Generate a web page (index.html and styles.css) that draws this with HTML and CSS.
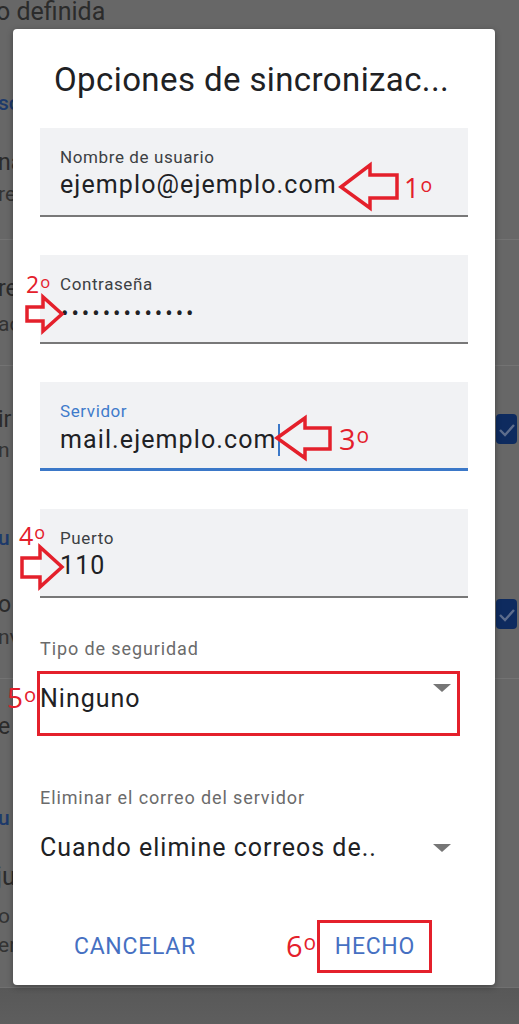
FILE: index.html
```html
<!DOCTYPE html>
<html lang="es">
<head>
<meta charset="utf-8">
<title>Opciones de sincronización</title>
<link rel="stylesheet" href="styles.css">
</head>
<body>
<div class="screen">
  <div class="bg">
    <div class="bg-big mt-n2">o definida</div>
    <div class="bg-head mt-65">sco</div>
    <div class="bg-title mt-35">na</div>
    <div class="bg-sub mt-6">re</div>
    <div class="bg-sep mt-33"></div>
    <div class="bg-title mt-36">re</div>
    <div class="bg-sub mt-10">ac</div>
    <div class="bg-sep mt-29"></div>
    <div class="bg-item mt-41">
      <div class="bg-text">
        <div class="bg-title">ir</div>
        <div class="bg-sub mt-5">n</div>
      </div>
      <div class="bg-check"><svg viewBox="0 0 21 30" width="21" height="30"><path d="M4 16 L9 21 L18 11" fill="none" stroke="#5d6d8c" stroke-width="2.4"/></svg></div>
    </div>
    <div class="bg-head mt-64">u</div>
    <div class="bg-item mt-42">
      <div class="bg-text">
        <div class="bg-title">o</div>
        <div class="bg-sub mt-7">nv</div>
      </div>
      <div class="bg-check"><svg viewBox="0 0 21 30" width="21" height="30"><path d="M4 16 L9 21 L18 11" fill="none" stroke="#5d6d8c" stroke-width="2.4"/></svg></div>
    </div>
    <div class="bg-sep mt-29"></div>
    <div class="bg-title mt-35">e</div>
    <div class="bg-head mt-66">u</div>
    <div class="bg-big mt-33">ju</div>
    <div class="bg-sub mt-13">o</div>
    <div class="bg-sub mt-5">er</div>
  </div>
  <div class="bg-nav"></div>

  <div class="dialog">
    <h1 class="dlg-title">Opciones de sincronizac...</h1>
    <div class="field">
      <div class="field-label">Nombre de usuario</div>
      <div class="field-value">ejemplo@ejemplo.com</div>
    </div>
    <div class="field">
      <div class="field-label">Contraseña</div>
      <div class="field-value dots">•••••••••••••</div>
    </div>
    <div class="field focused">
      <div class="field-label">Servidor</div>
      <div class="field-value">mail.ejemplo.com<span class="caret"></span></div>
    </div>
    <div class="field">
      <div class="field-label">Puerto</div>
      <div class="field-value">110</div>
    </div>
    <div class="sel-label">Tipo de seguridad</div>
    <div class="select first"><span class="sel-value">Ninguno</span><span class="tri"></span></div>
    <div class="sel-label second">Eliminar el correo del servidor</div>
    <div class="select"><span class="sel-value">Cuando elimine correos de..</span><span class="tri"></span></div>
    <div class="actions">
      <button class="btn">CANCELAR</button>
      <button class="btn">HECHO</button>
    </div>
  </div>

  <div class="notes">
    <svg class="arrow a1" viewBox="0 0 60 47" width="60" height="47"><polygon points="2,24 31,2 31,12 58,12 58,35 31,35 31,45"/></svg>
    <span class="num n1">1<span class="ord">o</span></span>
    <span class="num n2">2<span class="ord">o</span></span>
    <svg class="arrow a2" viewBox="0 0 40 39" width="40" height="39"><polygon points="2,12 18,12 18,2 37,19 18,36 18,26 2,26"/></svg>
    <svg class="arrow a3" viewBox="0 0 57 44" width="57" height="44"><polygon points="2,22 30,2 30,12 55,12 55,33 30,33 30,42"/></svg>
    <span class="num n3">3<span class="ord">o</span></span>
    <span class="num n4">4<span class="ord">o</span></span>
    <svg class="arrow a4" viewBox="0 0 45 45" width="45" height="45"><polygon points="2,13 20,13 20,2 42,22 20,42 20,32 2,32"/></svg>
    <div class="box b1"></div>
    <span class="num n5">5<span class="ord">o</span></span>
    <div class="box b2"></div>
    <span class="num n6">6<span class="ord">o</span></span>
  </div>
</div>
</body>
</html>
```

FILE: styles.css
```css
* { box-sizing: border-box; }
html, body { margin: 0; padding: 0; }
body {
  width: 519px;
  height: 1024px;
  overflow: hidden;
  background: #666666;
  font-family: Roboto, "Noto Sans", Arial, sans-serif;
}
.screen {
  position: relative;
  width: 519px;
  height: 1024px;
  display: flex;
  flex-direction: column;
  background: #676767;
  overflow: hidden;
}
.bg {
  flex: 1;
  overflow: hidden;
  display: flex;
  flex-direction: column;
  color: #2b2b2b;
  white-space: nowrap;
}
.bg-nav {
  height: 37px;
  background: linear-gradient(#585858, #5e5e5e);
  border-top: 1px solid #707070;
}
.bg-big { font-size: 25px; line-height: 28px; margin-left: -4px; }
.bg-head { font-size: 21px; line-height: 24px; color: #1d3a6b; font-weight: 500; margin-left: -2px; }
.bg-title { font-size: 23px; line-height: 26px; margin-left: -2px; }
.bg-sub { font-size: 21px; line-height: 24px; margin-left: -2px; color: #333; }
.bg-sep { height: 1px; background: #737373; }
.bg-item { display: flex; justify-content: space-between; align-items: flex-start; }
.bg-check {
  width: 21px;
  height: 30px;
  margin-top: 7px;
  margin-right: 2px;
  background: #0e2b5f;
  border-radius: 4px;
}
.bg-check svg { display: block; }
.mt-n2 { margin-top: -2px; }
.mt-5 { margin-top: 5px; }
.mt-6 { margin-top: 6px; }
.mt-7 { margin-top: 7px; }
.mt-10 { margin-top: 10px; }
.mt-13 { margin-top: 13px; }
.mt-29 { margin-top: 29px; }
.mt-33 { margin-top: 33px; }
.mt-35 { margin-top: 35px; }
.mt-36 { margin-top: 36px; }
.mt-41 { margin-top: 41px; }
.mt-42 { margin-top: 42px; }
.mt-64 { margin-top: 64px; }
.mt-65 { margin-top: 65px; }
.mt-66 { margin-top: 66px; }

.dialog {
  position: absolute;
  left: 13px;
  top: 29px;
  width: 482px;
  height: 956px;
  background: #ffffff;
  border-radius: 4px;
  box-shadow: 0 2px 6px rgba(0,0,0,0.35);
  padding: 31px 27px 0 27px;
  display: flex;
  flex-direction: column;
}
.dlg-title {
  margin: 0 0 0 14px;
  font-size: 33px;
  line-height: 40px;
  font-weight: 400;
  letter-spacing: 0.4px;
  color: #202124;
  white-space: nowrap;
}
.field {
  margin-top: 28px;
  height: 89px;
  background: #f1f2f4;
  border-bottom: 2px solid #787878;
  padding: 19px 20px 0 20px;
}
.field + .field { margin-top: 38px; }
.field.focused { border-bottom: 3px solid #3b78c8; }
.field-label {
  font-size: 17px;
  line-height: 20px;
  letter-spacing: 0.6px;
  color: #3c4043;
}
.focused .field-label { color: #3f7bcb; }
.field-value {
  margin-top: 3px;
  font-size: 25px;
  line-height: 30px;
  letter-spacing: 1.1px;
  color: #202124;
  white-space: nowrap;
  display: flex;
  align-items: center;
}
.field-value.dots {
  font-size: 22px;
  letter-spacing: 3px;
  margin-left: 1px;
  padding-top: 2px;
}
.caret {
  display: inline-block;
  width: 2px;
  height: 32px;
  background: #3b78c8;
  margin-left: 1px;
}
.sel-label {
  margin-top: 41px;
  font-size: 18px;
  line-height: 20px;
  letter-spacing: 0.9px;
  color: #6b6b6b;
}
.sel-label.second { margin-top: 74px; }
.select {
  margin-top: 25px;
  height: 30px;
  display: flex;
  align-items: center;
  justify-content: space-between;
  padding-right: 17px;
}
.sel-value {
  font-size: 25px;
  line-height: 30px;
  letter-spacing: 1px;
  color: #202124;
}
.tri {
  width: 0;
  height: 0;
  border-left: 9px solid transparent;
  border-right: 9px solid transparent;
  border-top: 8px solid #767676;
}
.select.first .tri { margin-top: -22px; }
.actions {
  margin-top: 69px;
  display: flex;
  align-items: center;
  height: 30px;
}
.btn {
  background: none;
  border: 0;
  padding: 0;
  font-family: inherit;
  font-size: 23px;
  line-height: 30px;
  letter-spacing: 0.7px;
  color: #4670c2;
}
.btn:first-child { margin-left: 34px; }
.btn:last-child { margin-left: auto; margin-right: 53px; }

.notes { position: absolute; left: 0; top: 0; width: 519px; height: 1024px; pointer-events: none; }
.arrow { position: absolute; overflow: visible; }
.arrow polygon { fill: none; stroke: #e4202b; stroke-width: 3.5; stroke-linejoin: miter; }
.a1 { left: 339px; top: 163px; }
.a2 { left: 25px; top: 295px; }
.a3 { left: 275px; top: 416px; }
.a4 { left: 20px; top: 545px; }
.num {
  position: absolute;
  color: #e4202b;
  font-family: "Open Sans", Roboto, sans-serif;
  line-height: 1;
  white-space: nowrap;
}
.ord { font-size: 0.72em; vertical-align: 0.32em; margin-left: 1px; }
.n1 { left: 404px; top: 174px; font-size: 27px; }
.n2 { left: 26px; top: 273px; font-size: 23px; }
.n3 { left: 339px; top: 424px; font-size: 29px; }
.n4 { left: 19px; top: 523px; font-size: 25px; }
.n5 { left: 7px; top: 683px; font-size: 28px; }
.n6 { left: 286px; top: 931px; font-size: 29px; }
.box { position: absolute; border: 3px solid #e4202b; }
.b1 { left: 37px; top: 671px; width: 423px; height: 65px; }
.b2 { left: 317px; top: 920px; width: 115px; height: 53px; }
```
